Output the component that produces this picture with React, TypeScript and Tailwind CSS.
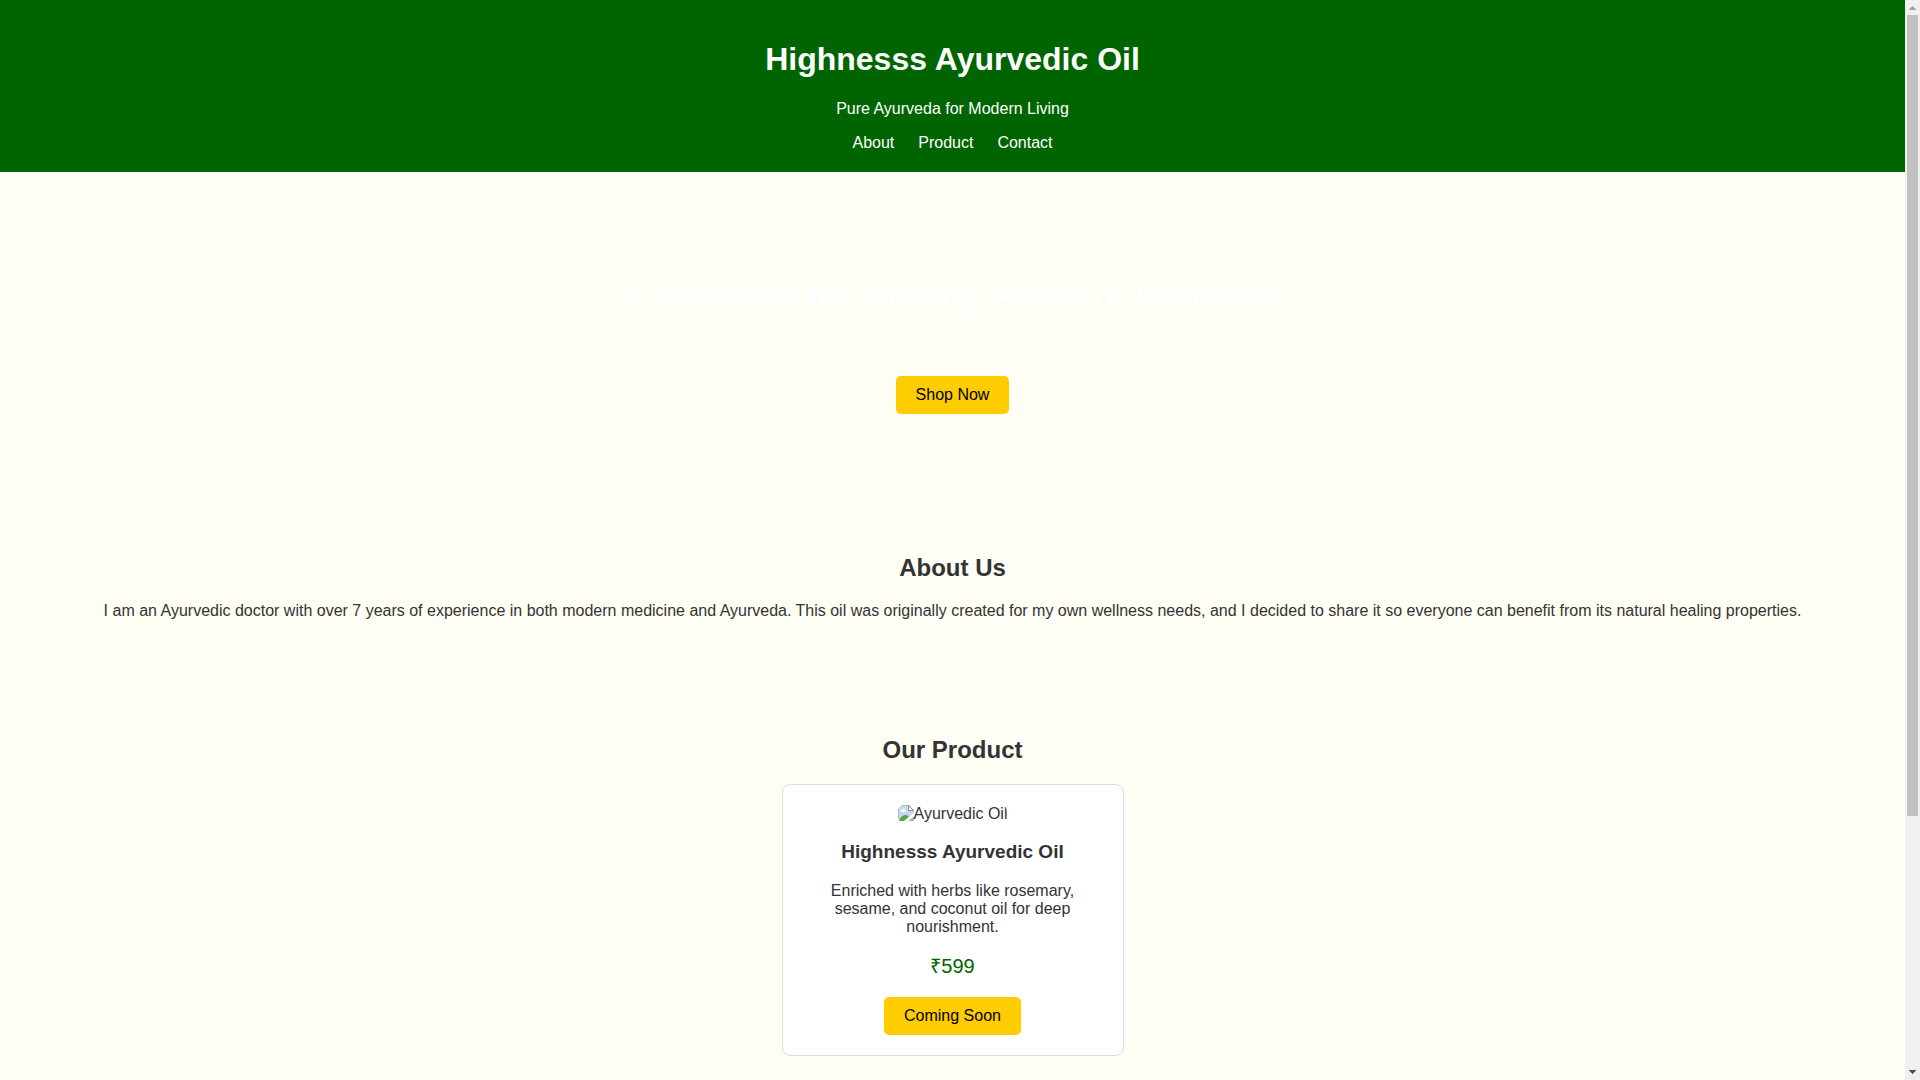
import React from 'react';

const NAV_LINKS = [
  { href: '#about', label: 'About' },
  { href: '#product', label: 'Product' },
  { href: '#contact', label: 'Contact' },
];

const BUTTON = 'rounded-[5px] bg-[#ffcc00] px-5 py-2.5 leading-[18px] text-black';

const Header = () => (
  <header className="bg-[#006400] px-5 pt-[41px] pb-5 text-white">
    <h1 className="text-[32px] leading-[37px] font-bold">Highnesss Ayurvedic Oil</h1>
    <p className="mt-[22px]">Pure Ayurveda for Modern Living</p>
    <nav className="mt-4 flex justify-center gap-6">
      {NAV_LINKS.map(link => (
        <a key={link.href} href={link.href}>
          {link.label}
        </a>
      ))}
    </nav>
  </header>
);

const Hero = () => (
  <section className="px-5 pt-[106px] pb-20 text-white">
    <h2 className="text-[32px] leading-[37px] font-bold">
      Experience the Healing Power of Ayurveda
    </h2>
    <p className="mt-[27px]">
      Crafted with 100% natural ingredients to nourish your body and mind.
    </p>
    <button type="button" className={`mt-4 ${BUTTON}`}>
      Shop Now
    </button>
  </section>
);

const About = () => (
  <section id="about" className="px-5 pt-[60px] pb-14">
    <h2 className="text-2xl leading-7 font-bold">About Us</h2>
    <p className="mt-5">
      I am an Ayurvedic doctor with over 7 years of experience in both modern medicine and Ayurveda.
      This oil was originally created for my own wellness needs, and I decided to share it so
      everyone can benefit from its natural healing properties.
    </p>
  </section>
);

const MissingImage = ({ alt }: { alt: string }) => (
  <span className="inline-flex overflow-hidden rounded-md">
    <svg className="h-4 w-4 shrink-0" viewBox="0 0 16 16">
      <path d="M0 0h11l5 5v3L6 16H0z" fill="#c6d7f5" />
      <path d="M0 .5h11M.5 0v16" fill="none" stroke="#b4b4b4" />
      <path d="M3 6a2 2 0 0 1 2-2 2 2 0 0 1 3 2v1H3z" fill="#fff" />
      <path d="M1 16c1-4 4-6 7-6 1 0 2 1 3 2l-5 4z" fill="#56a938" />
      <path d="M10.5.5v5h5z" fill="#fff" stroke="#8f8f8f" />
      <path d="M16 11v5h-6z" fill="#9fbf9f" />
      <path d="M6 16L16 8v3l-6 5z" fill="#fff" />
    </svg>
    <span>{alt}</span>
  </span>
);

const Product = () => (
  <section id="product" className="px-5 py-[60px]">
    <h2 className="text-2xl leading-7 font-bold">Our Product</h2>
    <div className="mx-auto mt-5 flex w-full max-w-[342px] flex-col items-center rounded-lg border border-[#dddddd] bg-white p-5">
      <MissingImage alt="Ayurvedic Oil" />
      <h3 className="mt-[18px] text-[19px] leading-[22px] font-bold">Highnesss Ayurvedic Oil</h3>
      <p className="mt-[19px]">
        Enriched with herbs like rosemary, sesame, and coconut oil for deep nourishment.
      </p>
      <p className="mt-[19px] text-xl leading-[22px] text-[#006400]">₹599</p>
      <button type="button" className={`mt-5 ${BUTTON}`}>
        Coming Soon
      </button>
    </div>
  </section>
);

const Scrollbar = () => (
  <div className="flex w-[15px] shrink-0 flex-col items-center bg-[#f0f0f0]">
    <svg className="h-[15px] w-[15px] shrink-0" viewBox="0 0 15 15" shapeRendering="crispEdges">
      <path d="M7 6h1v1h1v1h1v1h1v1H4V9h1V8h1V7h1z" fill="#a3a3a3" />
    </svg>
    <div className="flex w-[11px] grow flex-col">
      <div className="h-[76.3%] bg-[#c1c1c1]" />
    </div>
    <svg className="h-[15px] w-[15px] shrink-0" viewBox="0 0 15 15" shapeRendering="crispEdges">
      <path d="M4 5h7v1h-1v1H9v1H8v1H7V8H6V7H5V6H4z" fill="#505050" />
    </svg>
  </div>
);

const App: React.FC = () => (
  <div className="flex h-screen bg-[#fffef5] font-['Liberation_Sans',Arial,sans-serif] text-base leading-[18px] text-[#333333]">
    <main className="grow overflow-hidden text-center">
      <Header />
      <Hero />
      <About />
      <Product />
    </main>
    <Scrollbar />
  </div>
);

export default App;
